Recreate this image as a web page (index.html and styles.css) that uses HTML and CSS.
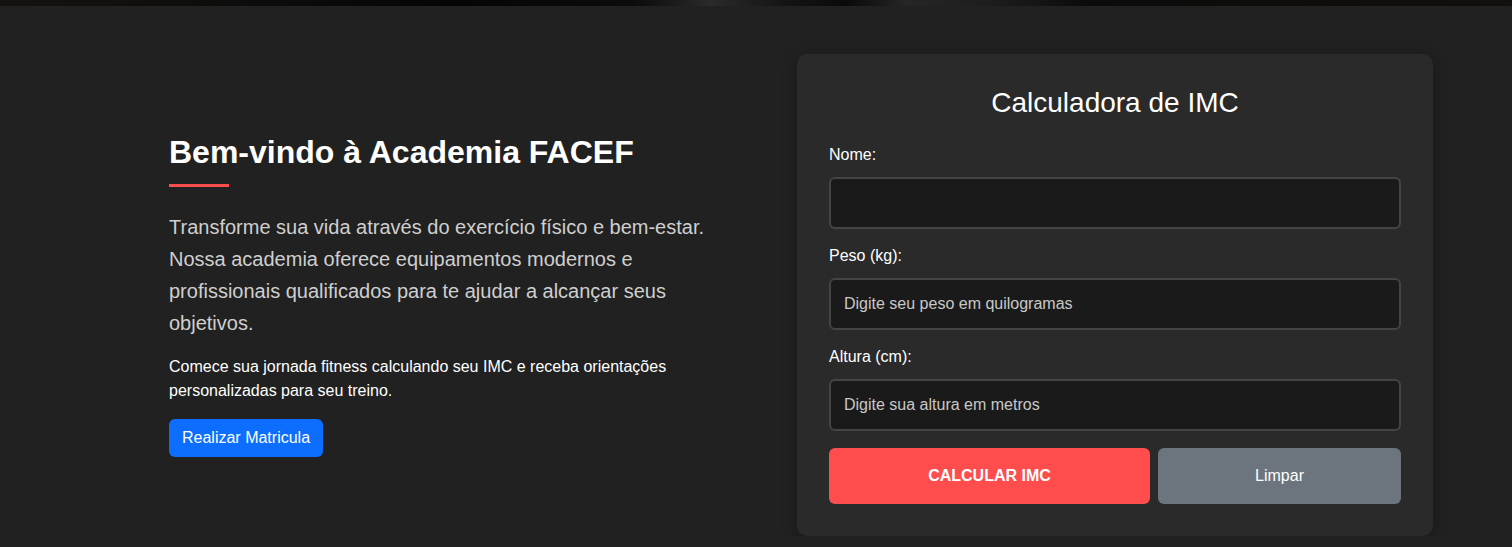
FILE: index.html
```html
<!DOCTYPE html>
<html lang="pt-BR">
<head>
<meta charset="utf-8">
<title>Academia FACEF</title>
<link rel="stylesheet" href="styles.css">
</head>
<body>
<div class="hero-strip"></div>
<section class="welcome">
  <div class="intro">
    <h2 class="intro-title">Bem-vindo à Academia FACEF</h2>
    <p class="intro-lead">Transforme sua vida através do exercício físico e bem-estar. Nossa academia oferece equipamentos modernos e profissionais qualificados para te ajudar a alcançar seus objetivos.</p>
    <p class="intro-note">Comece sua jornada fitness calculando seu IMC e receba orientações personalizadas para seu treino.</p>
    <button class="btn-primary" type="button">Realizar Matricula</button>
  </div>
  <div class="card">
    <h3 class="card-title">Calculadora de IMC</h3>
    <div class="field">
      <label class="field-label" for="nome">Nome:</label>
      <input class="field-input" id="nome" type="text">
    </div>
    <div class="field">
      <label class="field-label" for="peso">Peso (kg):</label>
      <input class="field-input" id="peso" type="text" placeholder="Digite seu peso em quilogramas">
    </div>
    <div class="field">
      <label class="field-label" for="altura">Altura (cm):</label>
      <input class="field-input" id="altura" type="text" placeholder="Digite sua altura em metros">
    </div>
    <div class="actions">
      <button class="btn-calc" type="button">Calcular IMC</button>
      <button class="btn-clear" type="button">Limpar</button>
    </div>
  </div>
</section>
</body>
</html>
```

FILE: styles.css
```css
* { box-sizing: border-box; }

html, body {
  margin: 0;
  padding: 0;
  background: #212121;
  font-family: "Liberation Sans", Arial, sans-serif;
  color: #fff;
  overflow: hidden;
}

.hero-strip {
  height: 6px;
  background: linear-gradient(90deg,
    #15130f 0%, #0b0b0b 20%, #050505 30%, #0c0c0c 42%,
    #2a2a2a 47%, #141414 52%, #0a0a0a 56%, #262626 60%,
    #1c1c1c 66%, #0b0b0b 72%, #0e0d0b 85%, #12100d 100%);
}

.welcome {
  display: flex;
  align-items: center;
  gap: 78px;
  padding: 48px 0 0 169px;
}

.intro {
  width: 550px;
}

.intro-title {
  position: relative;
  margin: 0 0 24px;
  padding-bottom: 16px;
  font-size: 32px;
  line-height: 38px;
  font-weight: 700;
  color: #fff;
}

.intro-title::after {
  content: "";
  position: absolute;
  left: 0;
  bottom: 0;
  width: 60px;
  height: 3px;
  background: #ff4d4d;
}

.intro-lead {
  margin: 0 0 16px;
  font-size: 20px;
  line-height: 32px;
  color: #cfcfcf;
}

.intro-note {
  margin: 0 0 16px;
  font-size: 16px;
  line-height: 24px;
  color: #fff;
}

.btn-primary {
  font-family: inherit;
  font-size: 16px;
  line-height: 24px;
  padding: 7px 13px;
  border: 0;
  border-radius: 6px;
  background: #0d6efd;
  color: #fff;
}

.card {
  width: 636px;
  padding: 32px;
  background: #2a2a2a;
  border-radius: 10px;
  box-shadow: 0 4px 16px rgba(0, 0, 0, 0.3);
}

.card-title {
  margin: 0 0 24px;
  text-align: center;
  font-size: 28px;
  line-height: 33px;
  font-weight: 400;
  color: #fff;
}

.field {
  margin-bottom: 15px;
}

.field-label {
  display: block;
  margin-bottom: 10px;
  font-size: 16px;
  line-height: 24px;
  color: #fff;
}

.field-input {
  display: block;
  width: 100%;
  height: 52px;
  padding: 0 13px;
  font-family: inherit;
  font-size: 16px;
  color: #fff;
  background: #1a1a1a;
  border: 2px solid #444;
  border-radius: 6px;
  outline: none;
}

.field-input::placeholder {
  color: #c8c8c8;
  opacity: 1;
}

.actions {
  display: grid;
  grid-template-columns: 321fr 243fr;
  gap: 8px;
  margin-top: 17px;
}

.btn-calc,
.btn-clear {
  font-family: inherit;
  font-size: 16px;
  line-height: 24px;
  padding: 16px;
  border: 0;
  border-radius: 6px;
  color: #fff;
}

.btn-calc {
  background: #ff4d4d;
  font-weight: 700;
  text-transform: uppercase;
}

.btn-clear {
  background: #6c757d;
}
```
